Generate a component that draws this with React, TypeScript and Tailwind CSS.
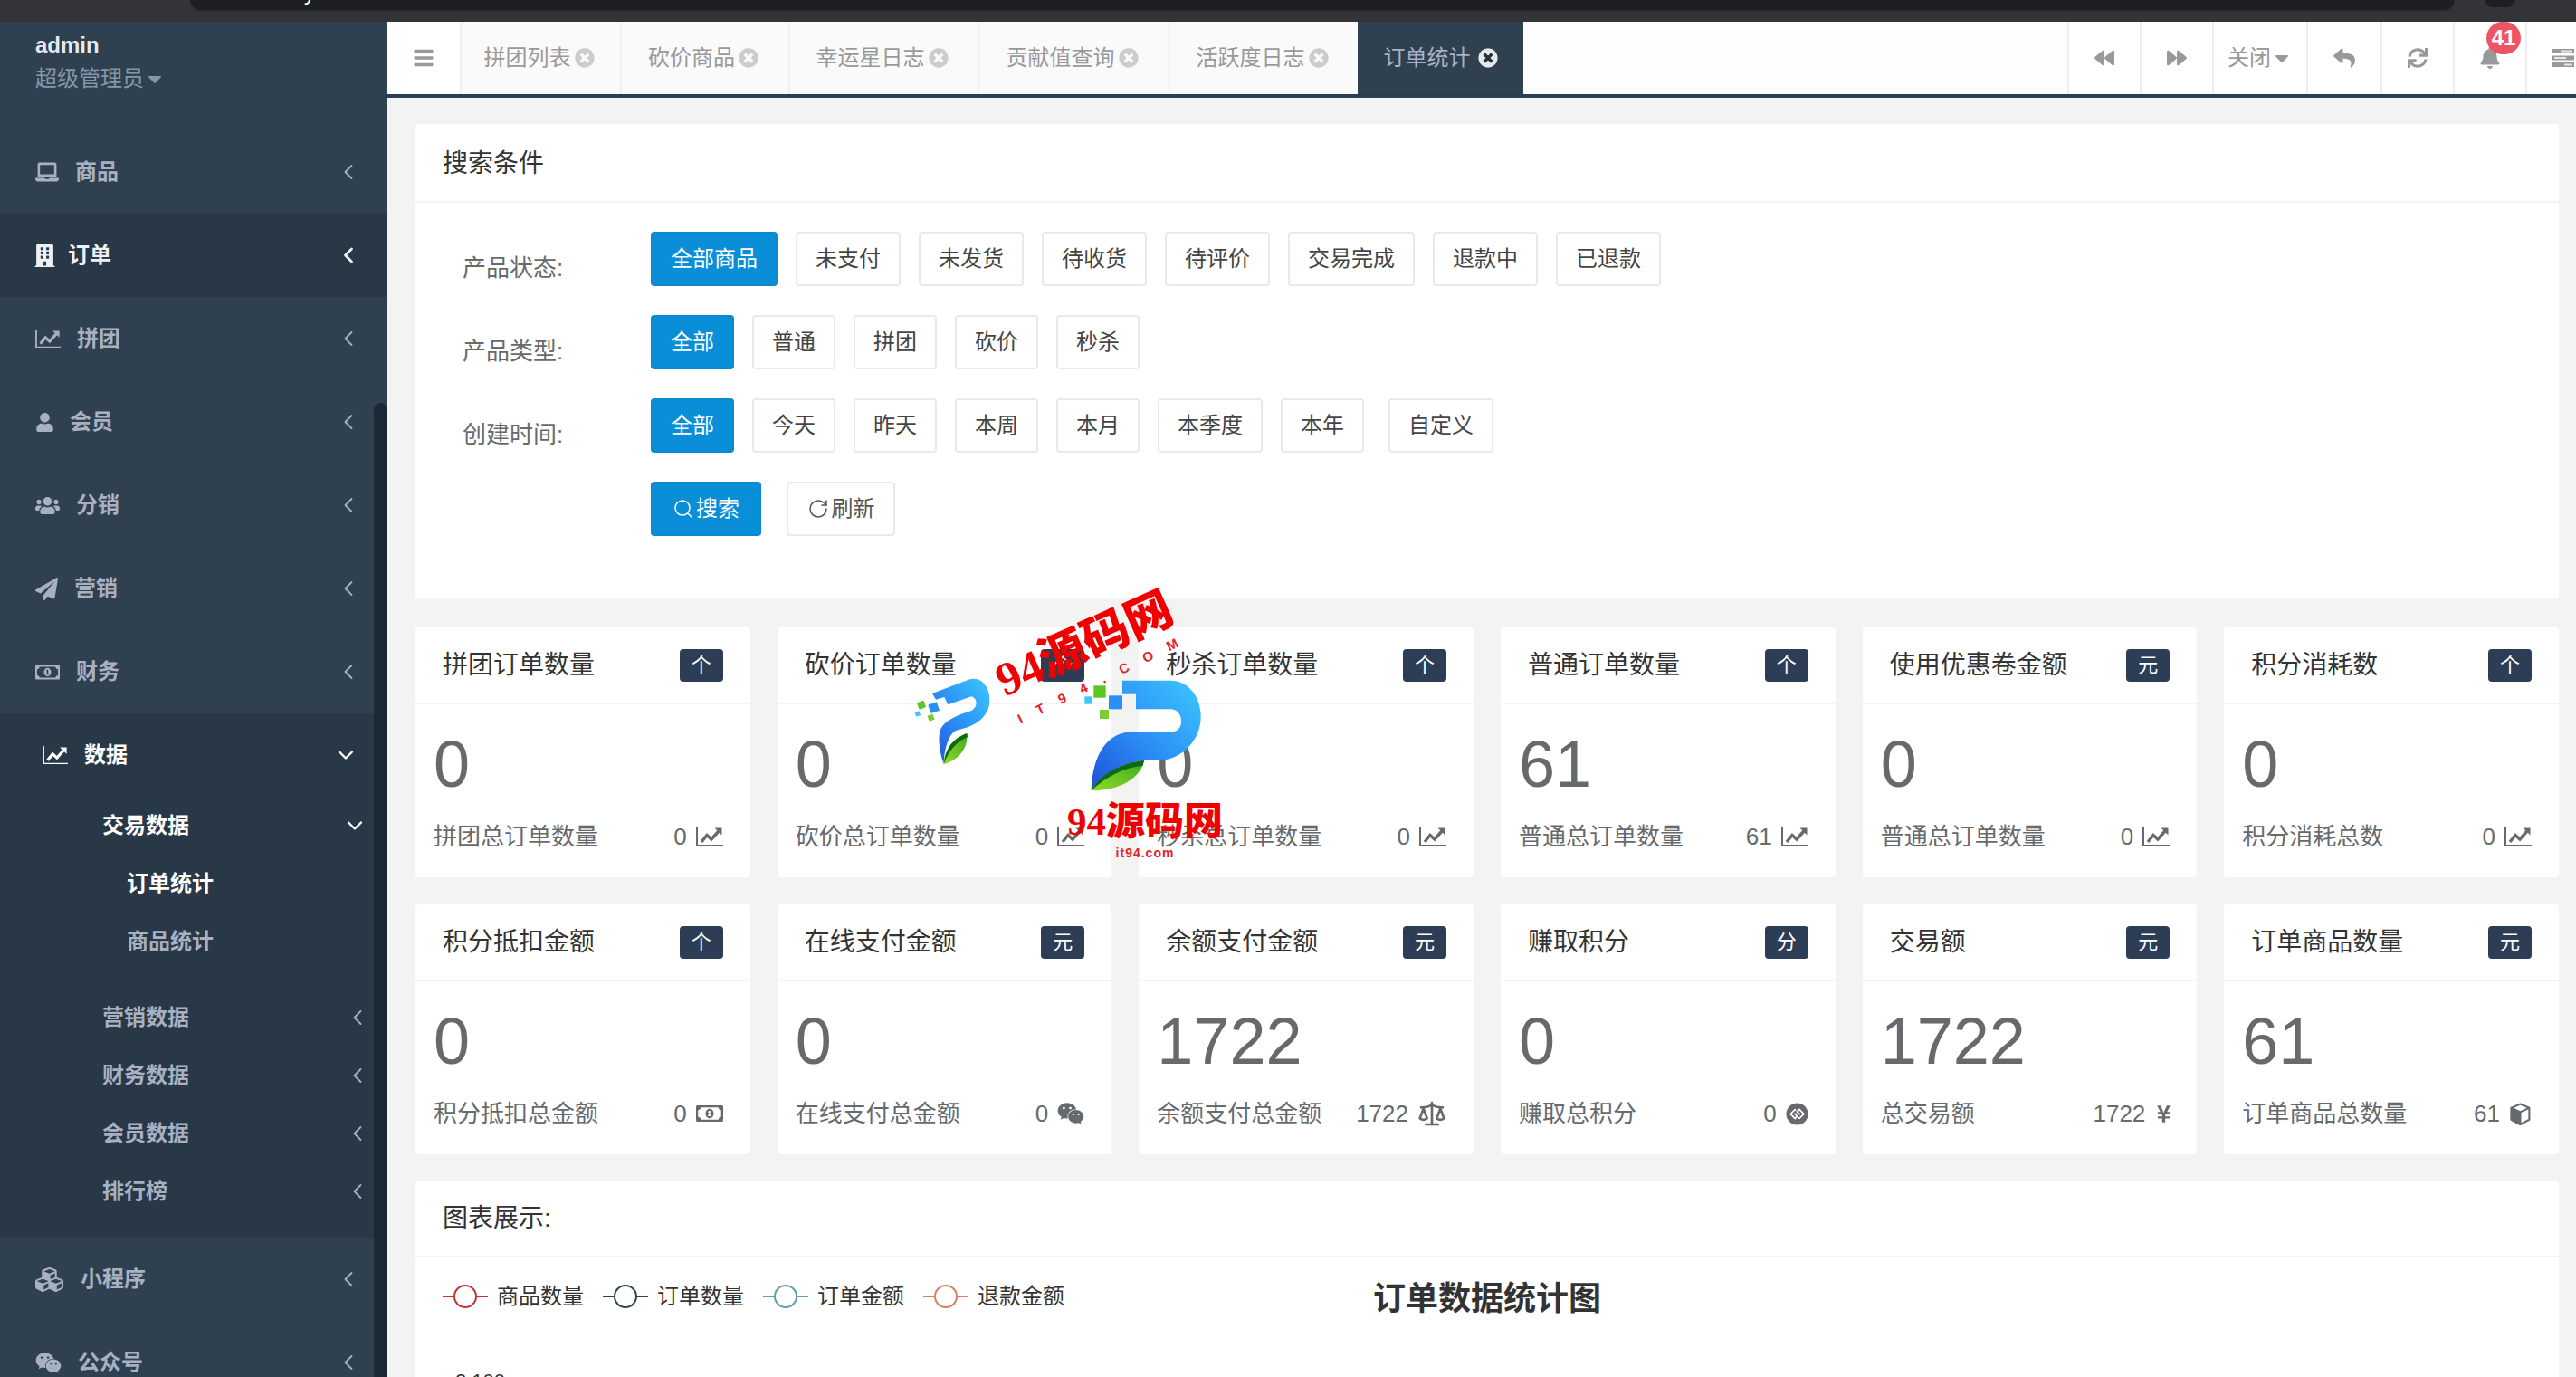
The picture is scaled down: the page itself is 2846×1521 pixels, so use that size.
import React from 'react';
import {
  FaLaptop, FaBuilding, FaUser, FaUsers, FaPaperPlane, FaRegMoneyBillAlt, FaCubes, FaWeixin,
  FaCaretDown, FaBars, FaTimesCircle, FaBackward, FaForward, FaReply, FaSync, FaBell,
  FaGgCircle, FaYenSign,
} from 'react-icons/fa';
import { Search, RotateCw, ChevronLeft, ChevronDown, Scale } from 'lucide-react';

type IconT = React.ComponentType<{ size?: number }>;

function ChartIcon({ size = 30 }: { size?: number }) {
  return (
    <svg width={size} height={(size * 22) / 30} viewBox="0 0 30 22" fill="none" stroke="currentColor">
      <path d="M1 0V21H30" strokeWidth="2" />
      <path d="M6 17L12 9.5L17 14L25 5" strokeWidth="3.4" />
      <path d="M20.5 1.5H28.5V9.5Z" fill="currentColor" stroke="none" />
    </svg>
  );
}

function CubeIcon({ size = 25 }: { size?: number }) {
  return (
    <svg width={size} height={size} viewBox="0 0 24 24" fill="none" stroke="currentColor" strokeWidth="2" strokeLinejoin="round">
      <path d="M12 1.5L21.5 5.5V18L12 23L2.5 18V5.5Z" />
      <path d="M2.5 5.5L12 10V23L2.5 18Z" fill="currentColor" />
      <path d="M12 10L21.5 5.5" />
    </svg>
  );
}

function TasksIcon() {
  return (
    <svg width="24" height="20" viewBox="0 0 24 20" className="shrink-0">
      <rect x="0" y="0" width="24" height="5" fill="#999" />
      <rect x="0" y="7.5" width="24" height="5" fill="#999" />
      <rect x="0" y="15" width="24" height="5" fill="#999" />
      <rect x="9" y="1.5" width="13" height="2" fill="#e8e8e8" />
      <rect x="2" y="9" width="13" height="2" fill="#e8e8e8" />
      <rect x="13" y="16.5" width="9" height="2" fill="#e8e8e8" />
    </svg>
  );
}

const nav1 = [
  { t: '商品', I: FaLaptop as IconT, w: 'w-[44px]', s: 26 },
  { t: '订单', I: FaBuilding as IconT, w: 'w-[38px] -ml-[2px]', s: 25, on: true },
  { t: '拼团', I: ChartIcon as IconT, w: 'w-[46px]', s: 28 },
  { t: '会员', I: FaUser as IconT, w: 'w-[38px]', s: 21 },
  { t: '分销', I: FaUsers as IconT, w: 'w-[45px]', s: 27 },
  { t: '营销', I: FaPaperPlane as IconT, w: 'w-[43px]', s: 25 },
  { t: '财务', I: FaRegMoneyBillAlt as IconT, w: 'w-[45px]', s: 27 },
];
const nav2 = [
  { t: '小程序', I: FaCubes as IconT, w: 'w-[50px]', s: 31 },
  { t: '公众号', I: FaWeixin as IconT, w: 'w-[47px]', s: 29 },
];

function NavItem({ t, I, w, s, on }: { t: string; I: IconT; w: string; s: number; on?: boolean }) {
  return (
    <div className={`flex h-[92px] items-center pl-[39px] pr-[29px] text-[24px] font-bold ${on ? 'bg-[#293846] text-[#eef1f5]' : 'text-[#a7b1c2]'}`}>
      <span className={`${w} flex shrink-0 items-center`}><I size={s} /></span>
      <span>{t}</span>
      <ChevronLeft size={28} strokeWidth={on ? 2.4 : 1.6} className="ml-auto" />
    </div>
  );
}

function SubItem({ t }: { t: string }) {
  return (
    <div className="flex h-[64px] items-center pl-[113px] pr-[19px] text-[24px] font-bold text-[#a7b1c2]">
      <span>{t}</span>
      <ChevronLeft size={28} strokeWidth={1.6} className="ml-auto" />
    </div>
  );
}

function Sidebar() {
  return (
    <aside className="relative w-[428px] shrink-0 overflow-hidden bg-[#2f4050]">
      <div className="h-[120px] pl-[39px] pt-[8px]">
        <div className="text-[24px] font-bold leading-[36px] text-[#e3e8ef]">admin</div>
        <div className="mt-[2px] flex items-center text-[24px] leading-[34px] text-[#8496a8]">超级管理员<FaCaretDown size={24} /></div>
      </div>
      {nav1.map((n) => <NavItem key={n.t} {...n} />)}
      <div className="bg-[#293846] pb-[19px]">
        <div className="flex h-[92px] items-center pl-[47px] pr-[32px] text-[24px] font-bold text-white">
          <span className="flex w-[46px] shrink-0 items-center"><ChartIcon size={28} /></span>
          <span>数据</span>
          <ChevronDown size={28} strokeWidth={2} className="ml-auto" />
        </div>
        <div className="flex h-[64px] items-center pl-[113px] pr-[22px] text-[24px] font-bold text-white">
          <span>交易数据</span>
          <ChevronDown size={28} strokeWidth={2} className="ml-auto" />
        </div>
        <div className="flex h-[64px] items-center pl-[140px] text-[24px] font-bold text-white">订单统计</div>
        <div className="mb-[20px] flex h-[64px] items-center pl-[140px] text-[24px] font-bold text-[#a7b1c2]">商品统计</div>
        <SubItem t="营销数据" />
        <SubItem t="财务数据" />
        <SubItem t="会员数据" />
        <SubItem t="排行榜" />
      </div>
      {nav2.map((n) => <NavItem key={n.t} {...n} />)}
      <div className="absolute left-[413px] top-[421px] h-[1100px] w-[15px] rounded-t-[8px] bg-[#1c2935]" />
    </aside>
  );
}

const tabs = [
  { t: '拼团列表', w: 'w-[177px]' },
  { t: '砍价商品', w: 'w-[186px]' },
  { t: '幸运星日志', w: 'w-[209px]' },
  { t: '贡献值查询', w: 'w-[211px]' },
  { t: '活跃度日志', w: 'w-[209px]' },
];

function TabBar() {
  return (
    <header className="flex h-[84px] shrink-0 border-b-[4px] border-[#2c3d55] bg-white text-[24px] text-[#999]">
      <div className="flex w-[80px] items-center justify-center"><FaBars size={24} className="text-[#999]" /></div>
      {tabs.map((x) => (
        <div key={x.t} className={`${x.w} flex items-center justify-center gap-[4px] border-l-2 border-[#eeeeee] bg-[#fafafa] pr-[4px]`}>
          <span>{x.t}</span>
          <FaTimesCircle size={22} className="text-[#cccccc]" />
        </div>
      ))}
      <div className="flex w-[183px] items-center justify-center gap-[8px] bg-[#2f4050] text-[#a7b1c2]">
        <span>订单统计</span>
        <FaTimesCircle size={22} className="rounded-full bg-[#24303c] text-[#e6e8ea]" />
      </div>
      <div className="flex-1 bg-[#fdfdfd]" />
      <div className="flex w-[80px] items-center justify-center border-l-2 border-[#eeeeee]"><FaBackward size={22} /></div>
      <div className="flex w-[80px] items-center justify-center border-l-2 border-[#eeeeee]"><FaForward size={22} /></div>
      <div className="flex w-[104px] items-center justify-center border-l-2 border-[#eeeeee]">关闭<FaCaretDown size={24} /></div>
      <div className="flex w-[82px] items-center justify-center border-l-2 border-[#eeeeee]"><FaReply size={24} /></div>
      <div className="flex w-[80px] items-center justify-center border-l-2 border-[#eeeeee]"><FaSync size={22} /></div>
      <div className="relative flex w-[80px] items-center justify-center border-l-2 border-[#eeeeee]">
        <FaBell size={24} />
        <span className="absolute left-[35px] top-0 flex h-[36px] w-[38px] items-center justify-center rounded-full bg-[#ed5565] text-[24px] font-bold text-white">41</span>
      </div>
      <div className="flex w-[56px] items-center border-l-2 border-[#eeeeee] pl-[28px]"><TasksIcon /></div>
    </header>
  );
}

function Btn({ t, on, extra }: { t: string; on?: boolean; extra?: boolean }) {
  return (
    <div className={`flex h-[60px] items-center rounded-[4px] border-2 px-[20px] text-[24px] ${extra ? 'ml-[7px]' : ''} ${on ? 'border-[#0b8ad2] bg-[#0b8ed8] text-white' : 'border-[#e7eaec] bg-white text-[#444]'}`}>{t}</div>
  );
}

function FilterRow({ label, items, last }: { label: string; items: string[]; last?: boolean }) {
  return (
    <div className="mb-[32px] flex h-[60px] pl-[52px]">
      <div className="h-[60px] w-[208px] text-[26px] leading-[80px] text-[#676a6c]">{label}</div>
      <div className="flex gap-[20px]">
        {items.map((x, i) => <Btn key={x} t={x} on={i === 0} extra={last && i === items.length - 1} />)}
      </div>
    </div>
  );
}

function SearchCard() {
  return (
    <section className="h-[524px] rounded-[4px] bg-white">
      <div className="flex h-[87px] items-center border-b-2 border-[#f3f3f4] pl-[30px] pt-[2px] text-[28px] text-[#333]">搜索条件</div>
      <div className="pt-[32px]">
        <FilterRow label="产品状态:" items={['全部商品', '未支付', '未发货', '待收货', '待评价', '交易完成', '退款中', '已退款']} />
        <FilterRow label="产品类型:" items={['全部', '普通', '拼团', '砍价', '秒杀']} />
        <FilterRow label="创建时间:" items={['全部', '今天', '昨天', '本周', '本月', '本季度', '本年', '自定义']} last />
        <div className="flex gap-[28px] pl-[260px] text-[24px]">
          <div className="flex h-[60px] w-[122px] items-center justify-center gap-[2px] rounded-[4px] border-2 border-[#0b8ad2] bg-[#0b8ed8] text-white"><Search size={24} strokeWidth={1.5} />搜索</div>
          <div className="flex h-[60px] w-[120px] items-center justify-center gap-[3px] rounded-[4px] border-2 border-[#e7eaec] bg-white text-[#555]"><RotateCw size={24} strokeWidth={1.5} />刷新</div>
        </div>
      </div>
    </section>
  );
}

type Stat = { title: string; unit: string; value: string; label: string; I: IconT; s?: number; nudge?: string };
const chart = ChartIcon as IconT;
const stats: Stat[] = [
  { title: '拼团订单数量', unit: '个', value: '0', label: '拼团总订单数量', I: chart },
  { title: '砍价订单数量', unit: '个', value: '0', label: '砍价总订单数量', I: chart },
  { title: '秒杀订单数量', unit: '个', value: '0', label: '秒杀总订单数量', I: chart },
  { title: '普通订单数量', unit: '个', value: '61', label: '普通总订单数量', I: chart },
  { title: '使用优惠卷金额', unit: '元', value: '0', label: '普通总订单数量', I: chart },
  { title: '积分消耗数', unit: '个', value: '0', label: '积分消耗总数', I: chart },
  { title: '积分抵扣金额', unit: '个', value: '0', label: '积分抵扣总金额', I: FaRegMoneyBillAlt as IconT },
  { title: '在线支付金额', unit: '元', value: '0', label: '在线支付总金额', I: FaWeixin as IconT },
  { title: '余额支付金额', unit: '元', value: '1722', label: '余额支付总金额', I: Scale as unknown as IconT, s: 32 },
  { title: '赚取积分', unit: '分', value: '0', label: '赚取总积分', I: FaGgCircle as IconT, s: 25 },
  { title: '交易额', unit: '元', value: '1722', label: '总交易额', I: FaYenSign as IconT, s: 21, nudge: 'mr-[-4px]' },
  { title: '订单商品数量', unit: '元', value: '61', label: '订单商品总数量', I: CubeIcon as IconT, s: 25 },
];

function StatCard({ d }: { d: Stat }) {
  const I = d.I;
  return (
    <div className="h-[276px] rounded-[4px] bg-white">
      <div className="flex h-[85px] items-center justify-between border-b-2 border-[#f3f3f4] pl-[30px] pr-[30px] text-[28px] text-[#333]">
        <span>{d.title}</span>
        <span className="flex h-[36px] w-[48px] items-center justify-center rounded-[4px] bg-[#2c3d55] text-[22px] text-white">{d.unit}</span>
      </div>
      <div className="pl-[20px] pr-[30px] pt-[30px] text-[#676a6c]">
        <div className="text-[72px] leading-[72px]">{d.value}</div>
        <div className="mt-[27px] flex h-[34px] items-center text-[26px]">
          <span>{d.label}</span>
          <span className={`ml-auto flex items-center gap-[10px] ${d.nudge ?? ''}`}>{d.value}<I size={d.s ?? 30} /></span>
        </div>
      </div>
    </div>
  );
}

const legend = [
  { t: '商品数量', c: '#c23531' },
  { t: '订单数量', c: '#2f4554' },
  { t: '订单金额', c: '#61a0a8' },
  { t: '退款金额', c: '#d48265' },
];

function ChartCard() {
  return (
    <section className="h-[300px] rounded-[4px] bg-white">
      <div className="flex h-[85px] items-center border-b-2 border-[#f3f3f4] pl-[30px] text-[28px] text-[#333]">图表展示:</div>
      <div className="grid grid-cols-3 px-[30px] pt-[21px]">
        <div className="flex h-[44px] items-center gap-[21px] text-[24px] text-[#333]">
          {legend.map((l) => (
            <div key={l.t} className="flex items-center gap-[10px]">
              <svg width="50" height="28" viewBox="0 0 50 28" fill="none" stroke={l.c} strokeWidth="2">
                <path d="M0 14H13M37 14H50" />
                <circle cx="25" cy="14" r="12" fill="#fff" />
              </svg>
              <span>{l.t}</span>
            </div>
          ))}
        </div>
        <div className="text-center text-[36px] font-bold leading-[50px] text-[#333]">订单数据统计图</div>
      </div>
      <div className="mt-[55px] pl-[44px] text-[22px] leading-[22px] text-[#333]">2,100</div>
    </section>
  );
}

function Watermark() {
  return (
    <div className="pointer-events-none absolute left-[960px] top-[640px] h-[320px] w-[420px]">
      <svg viewBox="0 0 1260 960" className="absolute inset-0 h-full w-full">
        <defs>
          <linearGradient id="blueBig" x1="1" y1="0" x2="0" y2="1">
            <stop offset="0" stopColor="#3cc8ff" />
            <stop offset="0.55" stopColor="#2a8cf5" />
            <stop offset="1" stopColor="#1f4fd8" />
          </linearGradient>
          <linearGradient id="greenLeaf" x1="0" y1="1" x2="1" y2="0">
            <stop offset="0" stopColor="#8fdc2a" />
            <stop offset="1" stopColor="#3fa81e" />
          </linearGradient>
        </defs>
        <path d="M840 335H1000C1060 335 1100 390 1100 455C1100 530 1040 598 960 600L910 600C830 610 770 650 737 700C740 610 770 510 870 505L1000 505C1025 505 1035 490 1035 470C1035 445 1020 430 1000 430L885 430V380H840Z" fill="url(#blueBig)" />
        <path d="M737 700C770 640 840 610 912 600C900 660 830 700 737 700Z" fill="url(#greenLeaf)" />
        <path d="M737 700C770 640 840 608 912 600L908 618C850 622 790 650 737 700Z" fill="#0a6b12" />
        <rect x="745" y="352" width="40" height="40" fill="#5ec422" />
        <rect x="795" y="385" width="45" height="45" fill="#2a90f5" />
        <rect x="715" y="388" width="25" height="25" fill="#3dc5ff" />
        <rect x="765" y="432" width="30" height="30" fill="#78d030" />
        <path d="M210 378L330 332C375 318 402 360 400 405C398 450 360 480 320 492L290 500C265 510 250 560 248 612C232 570 228 520 238 495C250 470 290 450 340 435C360 425 362 395 340 388L262 415L250 390L222 398Z" fill="url(#blueBig)" />
        <path d="M248 612C255 560 280 525 325 510C330 560 295 600 248 612Z" fill="url(#greenLeaf)" />
        <path d="M248 612C252 560 280 525 325 510L327 522C295 535 265 565 248 612Z" fill="#0a6b12" />
        <rect x="162" y="404" width="24" height="24" fill="#62c32a" transform="rotate(-20 174 416)" />
        <rect x="200" y="410" width="30" height="30" fill="#2a90f5" transform="rotate(-20 215 425)" />
        <rect x="154" y="438" width="15" height="15" fill="#3dc5ff" transform="rotate(-20 161 445)" />
        <rect x="196" y="449" width="19" height="19" fill="#78d030" transform="rotate(-20 205 458)" />
      </svg>
      <div className="absolute left-[238px] top-[72px] -translate-x-1/2 -translate-y-1/2 -rotate-[24deg] whitespace-nowrap font-['Liberation_Serif','Noto_Sans_CJK_SC',serif] text-[52px] font-black leading-none text-[#f00000]">94源码网</div>
      <div className="absolute left-[261px] top-[108px] -translate-x-1/2 -translate-y-1/2 -rotate-[26deg] whitespace-nowrap text-[15px] font-bold leading-none tracking-[18px] text-[#e8202a]">IT94.COM</div>
      <div className="absolute left-[305px] top-[267px] -translate-x-1/2 -translate-y-1/2 whitespace-nowrap font-['Liberation_Serif','Noto_Sans_CJK_SC',serif] text-[43px] font-black leading-none text-[#f00000]">94源码网</div>
      <div className="absolute left-[305px] top-[302px] -translate-x-1/2 -translate-y-1/2 whitespace-nowrap text-[14px] font-bold leading-none tracking-[1px] text-[#e8202a]">it94.com</div>
    </div>
  );
}

export default function App() {
  return (
    <div className="relative flex h-[1521px] w-[2846px] flex-col overflow-hidden bg-[#f3f3f4] font-['Liberation_Sans','Noto_Sans_CJK_SC',sans-serif]">
      <div className="relative flex h-[24px] shrink-0 bg-[#333437] pl-[210px]">
        <div className="relative h-[13px] w-[2502px] overflow-hidden rounded-b-[16px] border-b-2 border-[#2b2c30] bg-[#1e1f23]">
          <span className="absolute left-[126px] top-[-20px] text-[24px] leading-[24px] text-white">y</span>
        </div>
        <div className="absolute left-[2745px] top-[-10px] h-[18px] w-[34px] rounded-full bg-[#1e1f23]" />
      </div>
      <div className="flex min-h-0 flex-1">
        <Sidebar />
        <main className="min-w-0 flex-1 overflow-hidden">
          <TabBar />
          <div className="pl-[31px] pr-[19px] pt-[29px]">
            <SearchCard />
            <div className="mt-[32px] grid grid-cols-6 gap-x-[30px] gap-y-[30px]">
              {stats.map((d) => <StatCard key={d.title} d={d} />)}
            </div>
            <div className="mt-[29px]"><ChartCard /></div>
          </div>
        </main>
      </div>
      <Watermark />
    </div>
  );
}
